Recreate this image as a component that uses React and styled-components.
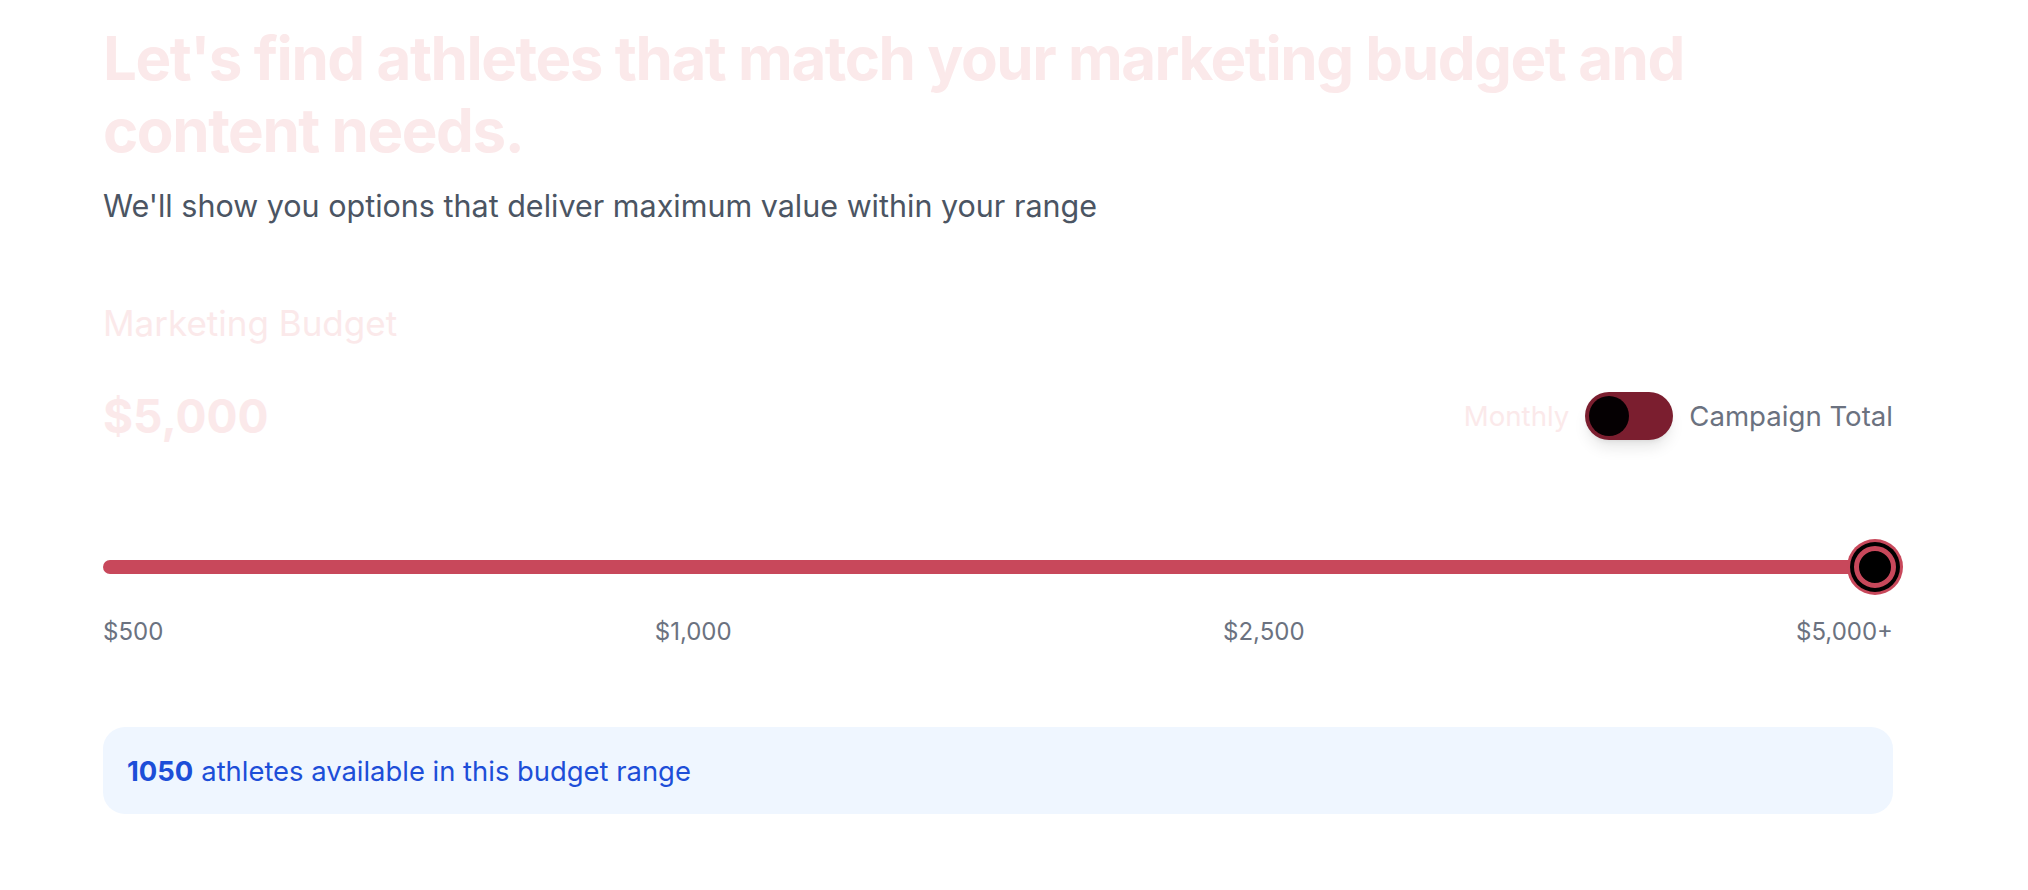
import React from "react";
import styled, { createGlobalStyle } from "styled-components";

const Global = createGlobalStyle`
  html, body { margin: 0; padding: 0; background: #ffffff; }
  body { font-family: Inter, "Noto Sans", "Liberation Sans", sans-serif; }
  * { box-sizing: border-box; }
`;

const Page = styled.main`
  width: 1790px;
  margin-left: 103px;
  padding-top: 22px;
`;

const Heading = styled.h1`
  margin: 0;
  font-size: 60px;
  line-height: 72px;
  font-weight: 700;
  letter-spacing: -0.024em;
  color: #fbe9ea;
  max-width: 1620px;
`;

const Subtitle = styled.p`
  margin: 20px 0 0;
  font-size: 30.5px;
  line-height: 40px;
  color: #4b5563;
`;

const Section = styled.section`
  margin-top: 77px;
  display: flex;
  flex-direction: column;
`;

const Label = styled.h2`
  margin: 0;
  font-size: 35px;
  line-height: 40px;
  font-weight: 400;
  color: #fbe9ea;
`;

const ValueRow = styled.div`
  margin-top: 45px;
  display: flex;
  align-items: center;
  justify-content: space-between;
`;

const Amount = styled.div`
  font-size: 46px;
  line-height: 56px;
  font-weight: 700;
  color: #fbe9ea;
`;

const ToggleGroup = styled.div`
  display: flex;
  align-items: center;
  gap: 16px;
`;

const ToggleText = styled.span`
  font-size: 27.6px;
  line-height: 32px;
  color: ${(p) => (p.$active ? "#6b7280" : "#fbe9ea")};
`;

const Switch = styled.button`
  width: 88px;
  height: 48px;
  padding: 4px;
  border: none;
  border-radius: 999px;
  background: #7b1e2f;
  display: flex;
  align-items: center;
  justify-content: flex-start;
  box-shadow: 0 10px 15px -3px rgba(0, 0, 0, 0.1), 0 4px 6px -4px rgba(0, 0, 0, 0.1);
  cursor: pointer;
`;

const Knob = styled.span`
  width: 40px;
  height: 40px;
  border-radius: 50%;
  background: #050002;
`;

const SliderArea = styled.div`
  margin-top: 116px;
`;

const Track = styled.div`
  position: relative;
  height: 14px;
  border-radius: 999px;
  background: #c8485b;
`;

const Thumb = styled.span`
  position: absolute;
  top: 50%;
  right: -3px;
  width: 42px;
  height: 42px;
  transform: translateY(-50%);
  border-radius: 50%;
  background: #000000;
  border: 5px solid #c8485b;
  box-shadow: 0 0 0 4px #000000, 0 0 0 7px #c8485b;
`;

const Ticks = styled.div`
  margin-top: 44px;
  display: flex;
  justify-content: space-between;
`;

const Tick = styled.span`
  font-size: 24px;
  line-height: 28px;
  color: #6b7280;
`;

const InfoBox = styled.div`
  margin-top: 81px;
  height: 87px;
  padding: 0 24px;
  display: flex;
  align-items: center;
  border-radius: 22px;
  background: #eff6ff;
  font-size: 27.4px;
  color: #1d4ed8;
`;

const Count = styled.strong`
  font-weight: 700;
  margin-right: 8px;
`;

export default function App() {
  return (
    <>
      <Global />
      <Page>
        <Heading>Let's find athletes that match your marketing budget and content needs.</Heading>
        <Subtitle>We'll show you options that deliver maximum value within your range</Subtitle>
        <Section>
          <Label>Marketing Budget</Label>
          <ValueRow>
            <Amount>$5,000</Amount>
            <ToggleGroup>
              <ToggleText>Monthly</ToggleText>
              <Switch aria-label="toggle budget type">
                <Knob />
              </Switch>
              <ToggleText $active>Campaign Total</ToggleText>
            </ToggleGroup>
          </ValueRow>
          <SliderArea>
            <Track>
              <Thumb />
            </Track>
          </SliderArea>
          <Ticks>
            <Tick>$500</Tick>
            <Tick>$1,000</Tick>
            <Tick>$2,500</Tick>
            <Tick>$5,000+</Tick>
          </Ticks>
          <InfoBox>
            <Count>1050</Count>athletes available in this budget range
          </InfoBox>
        </Section>
      </Page>
    </>
  );
}
